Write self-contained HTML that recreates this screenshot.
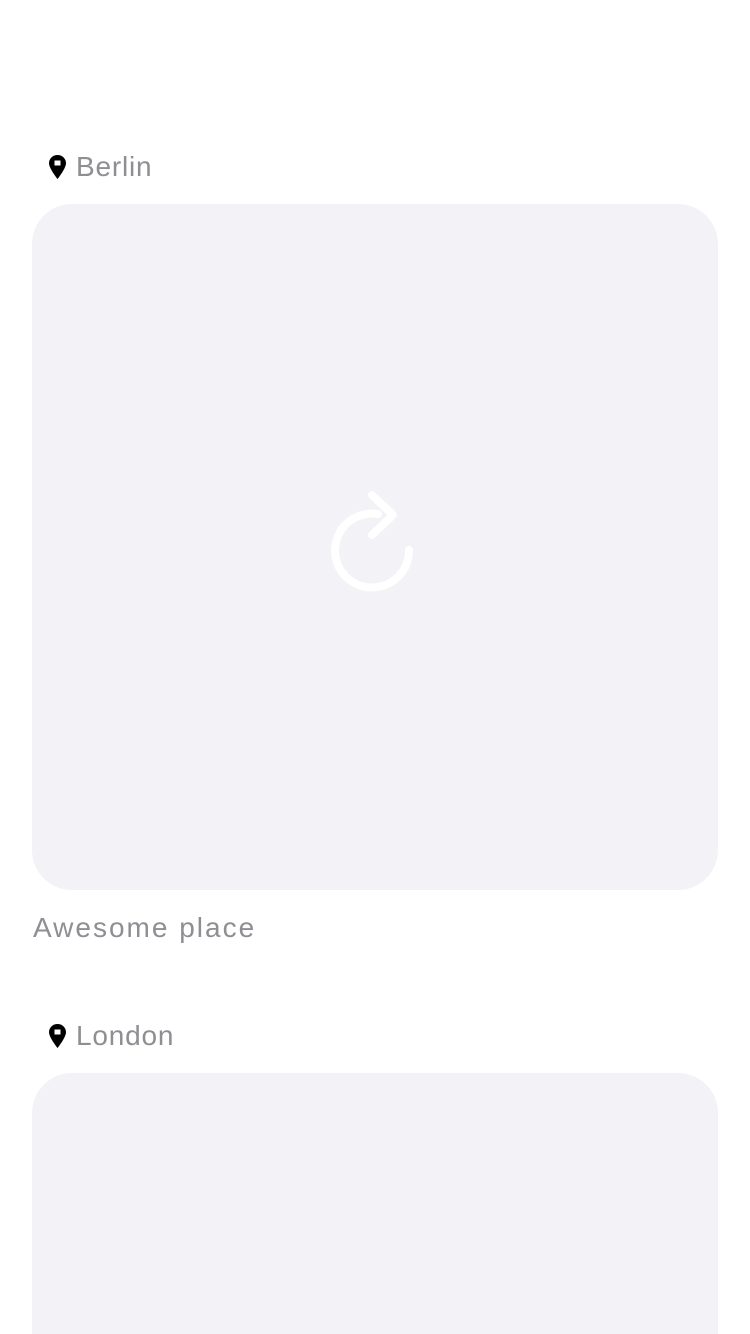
<!DOCTYPE html>
<html><head><meta charset="utf-8"><style>
html,body{margin:0;padding:0;background:#fff;width:750px;height:1334px;overflow:hidden;font-family:"Liberation Sans",sans-serif;}
#wrap{position:relative;width:750px;height:1334px;overflow:hidden;}
.lbl{position:absolute;left:49px;height:40px;display:flex;align-items:center;color:#8e8e93;font-size:28px;letter-spacing:0.8px;}
.lbl svg{margin-right:10px;}
.card{position:absolute;left:32px;width:686px;background:#f2f2f7;border-radius:40px;}
.cap{position:absolute;left:33px;color:#8e8e93;font-size:28px;letter-spacing:2px;}
</style></head><body><div id="wrap">
<div class="lbl" style="top:147px"><svg width="17" height="24" viewBox="0 0 17 24"><path d="M8.5 0C3.8 0 0 3.6 0 8.2c0 5.2 8.5 15.8 8.5 15.8S17 13.4 17 8.2C17 3.6 13.2 0 8.5 0z" fill="#000"/><rect x="5.5" y="5.5" width="6" height="5" fill="#fff"/></svg>Berlin</div>
<div class="card" style="top:204px;height:686px"></div>
<svg style="position:absolute;left:320px;top:480px" width="110" height="120" viewBox="320 480 110 120"><path d="M409 550 A37 37 0 1 1 378 514" fill="none" stroke="#fff" stroke-width="8" stroke-linecap="round"/><path d="M372 495 L393 515 L372 535" fill="none" stroke="#fff" stroke-width="8" stroke-linecap="round" stroke-linejoin="round"/></svg>
<div class="cap" style="top:912px">Awesome place</div>
<div class="lbl" style="top:1016px"><svg width="17" height="24" viewBox="0 0 17 24"><path d="M8.5 0C3.8 0 0 3.6 0 8.2c0 5.2 8.5 15.8 8.5 15.8S17 13.4 17 8.2C17 3.6 13.2 0 8.5 0z" fill="#000"/><rect x="5.5" y="5.5" width="6" height="5" fill="#fff"/></svg>London</div>
<div class="card" style="top:1073px;height:261px;border-radius:40px 40px 0 0"></div>
</div></body></html>
